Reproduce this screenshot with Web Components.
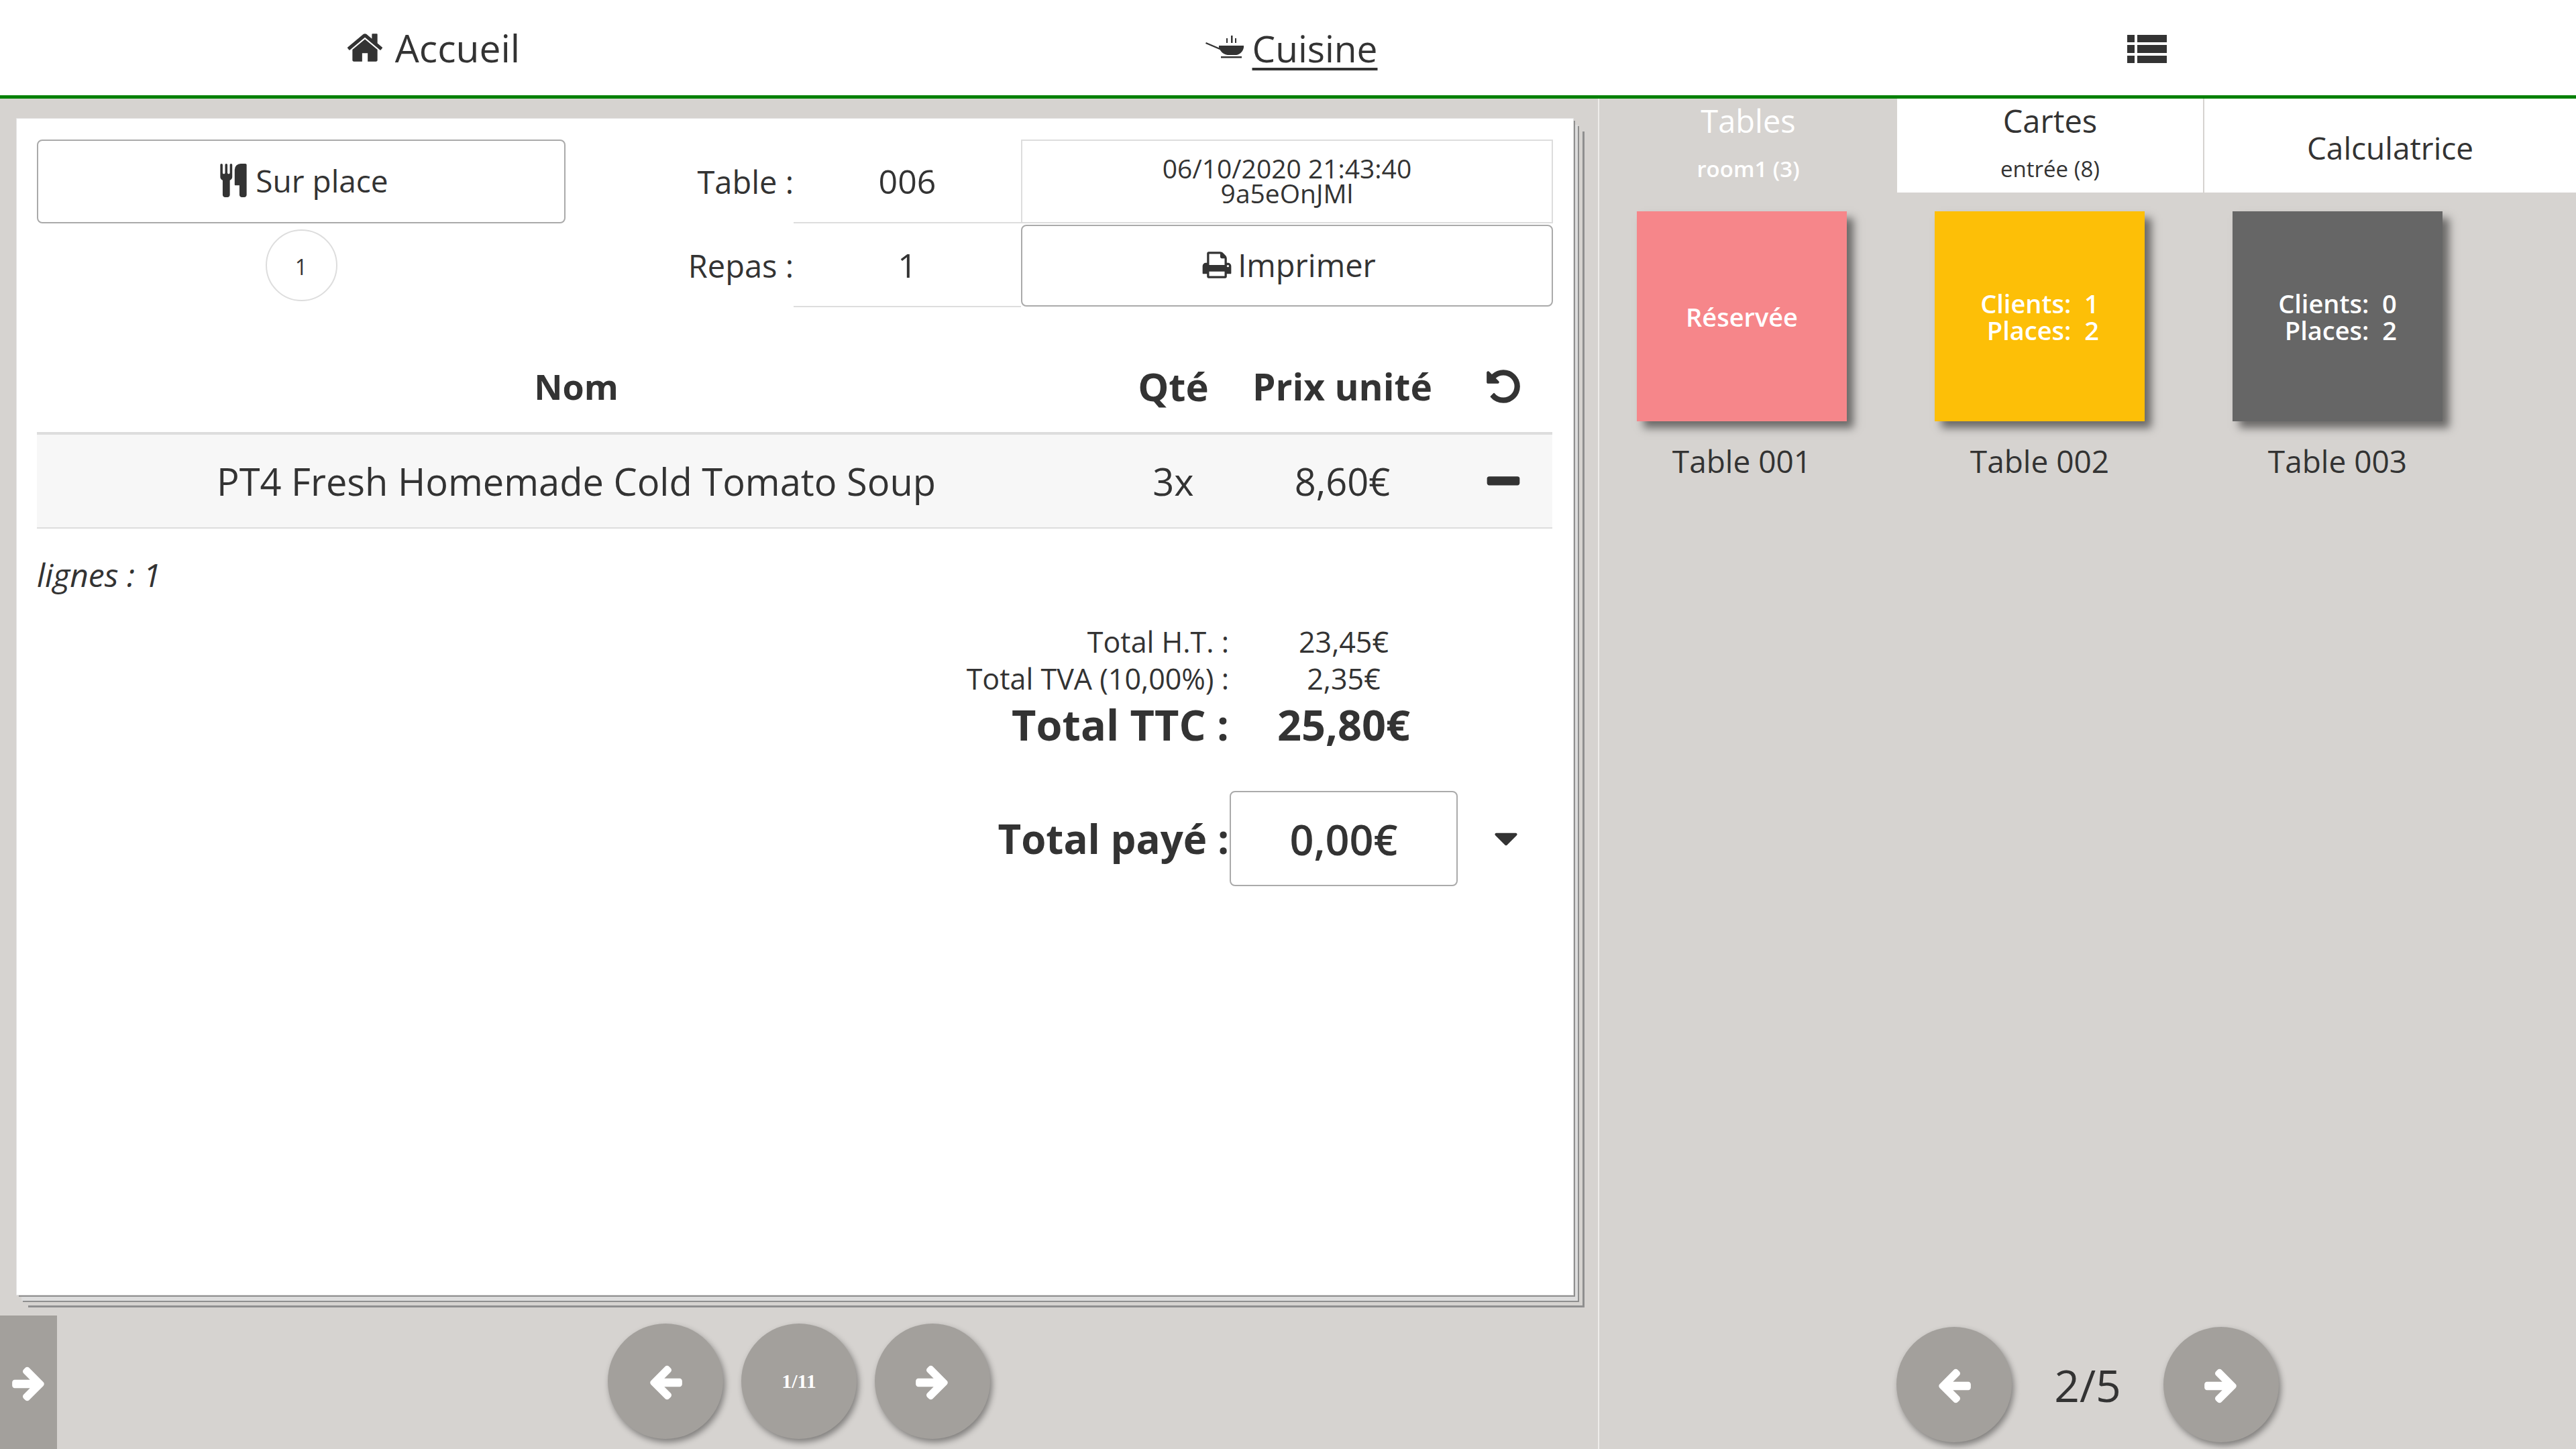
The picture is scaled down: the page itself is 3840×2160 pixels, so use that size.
<!DOCTYPE html>
<html lang="fr">
<head>
<meta charset="utf-8">
<title>Caisse</title>
<style>
html, body { margin: 0; height: 100%; overflow: hidden; }
body { font-family: "Open Sans", "Noto Sans", sans-serif; color: #333; background: #d6d3d0; }
</style>
</head>
<body>
<pos-app></pos-app>
<script>
const ICONS = {
    home: 'M1472 992v480q0 26-19 45t-45 19h-384v-384h-256v384h-384q-26 0-45-19t-19-45v-480q0-1 .5-3t.5-3l575-474 575 474q1 2 1 6zm223-69l-62 74q-8 9-21 11h-3q-13 0-21-7l-692-577-692 577q-12 8-24 7-13-2-21-11l-62-74q-8-10-7-23.500t11-21.500l719-599q32-26 76-26t76 26l244 204v-195q0-14 9-23t23-9h192q14 0 23 9t9 23v408l219 182q10 8 11 21.500t-7 23.500z',
    cutlery: 'M832 64v640q0 61-35.500 111t-92.500 70v779q0 52-38 90t-90 38h-128q-52 0-90-38t-38-90v-779q-57-20-92.500-70t-35.500-111v-640q0-26 19-45t45-19 45 19 19 45v416q0 26 19 45t45 19 45-19 19-45v-416q0-26 19-45t45-19 45 19 19 45v416q0 26 19 45t45 19 45-19 19-45v-416q0-26 19-45t45-19 45 19 19 45zm768 0v1600q0 52-38 90t-90 38h-128q-52 0-90-38t-38-90v-512h-224q-13 0-22.500-9.500t-9.500-22.500v-800q0-132 94-226t226-94h256q26 0 45 19t19 45z',
    print: 'M448 1536h896v-256h-896v256zm0-640h896v-384h-160q-40 0-68-28t-28-68v-160h-640v640zm1152 64q0-26-19-45t-45-19-45 19-19 45 19 45 45 19 45-19 19-45zm128 0v416q0 13-9.500 22.500t-22.500 9.500h-224v160q0 40-28 68t-68 28h-960q-40 0-68-28t-28-68v-160h-224q-13 0-22.500-9.500t-9.500-22.500v-416q0-79 56.500-135.500t135.500-56.500h64v-544q0-40 28-68t68-28h672q40 0 88 20t76 48l152 152q28 28 48 76t20 88v256h64q79 0 135.500 56.500t56.500 135.500z',
    undo: 'M1664 896q0 156-61 298t-164 245-245 164-298 61q-172 0-327-72.500t-264-204.500q-7-10-6.500-22.500t8.500-20.500l137-138q10-9 25-9 16 2 23 12 73 95 179 147t225 52q104 0 198.500-40.500t163.500-109.500 109.500-163.500 40.500-198.500-40.500-198.500-109.500-163.500-163.500-109.500-198.500-40.500q-98 0-188 35.500t-160 101.500l137 138q31 30 14 69-17 40-59 40h-448q-26 0-45-19t-19-45v-448q0-42 40-59 39-17 69 14l130 129q107-101 244.500-156.500t284.500-55.500q156 0 298 61t245 164 164 245 61 298z',
    left: 'M1664 896v128q0 53-32.500 90.500t-84.500 37.500h-704l293 294q38 36 38 90t-38 90l-75 76q-37 37-90 37-52 0-91-37l-651-652q-37-37-37-90 0-52 37-91l651-650q38-38 91-38 52 0 90 38l75 74q38 38 38 91t-38 91l-293 293h704q52 0 84.500 37.500t32.500 90.500z',
    right: 'M1600 960q0 54-37 91l-651 651q-39 37-91 37-51 0-90-37l-75-75q-38-38-38-91t38-91l293-293h-704q-52 0-84.500-37.500t-32.500-90.500v-128q0-53 32.500-90.500t84.500-37.500h704l-293-294q-38-36-38-90t38-90l75-75q38-38 90-38 53 0 91 38l651 651q37 35 37 90z',
    minus: 'M1600 736v192q0 40-28 68t-68 28h-1216q-40 0-68-28t-28-68v-192q0-40 28-68t68-28h1216q40 0 68 28t28 68z',
    caret: 'M1408 704q0 26-19 45l-448 448q-19 19-45 19t-45-19l-448-448q-19-19-19-45t19-45 45-19h896q26 0 45 19t19 45z'
};

class FaIcon extends HTMLElement {
    constructor() {
        super();
        this.attachShadow({ mode: 'open' });
    }

    connectedCallback() {
        const size = this.getAttribute('size') || 48;
        this.shadowRoot.innerHTML = `
        <style>
            :host { display: inline-flex; line-height: 0; }
            svg { width: ${size}px; height: ${size}px; fill: currentColor; }
        </style>
        <svg viewBox="0 0 1792 1792"><path d="${ICONS[this.getAttribute('name')]}"/></svg>`;
    }
}

class PosHeader extends HTMLElement {
    constructor() {
        super();
        this.attachShadow({ mode: 'open' });
    }

    connectedCallback() {
        this.shadowRoot.innerHTML = `
        <style>
            :host {
                display: grid;
                grid-template-columns: repeat(3, 1fr);
                height: 142px;
                background: #fff;
                border-bottom: 5px solid #008000;
                font-size: 57px;
            }
            .item { display: flex; align-items: center; justify-content: center; gap: 16px; padding-left: 10px; }
            .cuisine span { text-decoration: underline; text-decoration-thickness: 4px; text-underline-offset: 8px; font-size: 55px; }
            .cuisine { gap: 12px; }
            .list { padding: 3px 0 0; }
        </style>
        <div class="item"><fa-icon name="home" size="58"></fa-icon><span>Accueil</span></div>
        <div class="item cuisine">
            <svg width="58" height="36" viewBox="0 0 58 36" fill="#333">
                <path d="M1 10l21 9-1 2L0 12z"/>
                <path d="M20 15h37v3c-1 5-5 10-11 11H33c-6-1-11-5-13-11z"/>
                <rect x="23" y="31" width="31" height="2.500"/>
                <rect x="31" y="4" width="2" height="7"/><rect x="38" y="0" width="2.500" height="11"/><rect x="44" y="4" width="2" height="7"/>
            </svg>
            <span>Cuisine</span>
        </div>
        <div class="item list">
            <svg width="59" height="42" viewBox="0 0 59 42" fill="#333">
                <rect x="0" y="0" width="11" height="11"/><rect x="15" y="0" width="44" height="11"/>
                <rect x="0" y="15" width="11" height="12"/><rect x="15" y="15" width="44" height="12"/>
                <rect x="0" y="31" width="11" height="11"/><rect x="15" y="31" width="44" height="11"/>
            </svg>
        </div>`;
    }
}

class OutlineBox extends HTMLElement {
    constructor() {
        super();
        this.attachShadow({ mode: 'open' });
    }

    connectedCallback() {
        this.shadowRoot.innerHTML = `
        <style>
            :host {
                display: flex;
                align-items: center;
                justify-content: center;
                gap: 12px;
                box-sizing: border-box;
                background: #fff;
                border: 2px solid #aaa;
                border-radius: 8px;
            }
        </style>
        <slot></slot>`;
    }
}

class OrderSheet extends HTMLElement {
    constructor() {
        super();
        this.attachShadow({ mode: 'open' });
    }

    connectedCallback() {
        this.shadowRoot.innerHTML = `
        <style>
            :host {
                display: block;
                box-sizing: border-box;
                width: 2320px;
                height: 1753px;
                margin: 30px 0 0 25px;
                padding: 31px 31px 0 30px;
                background: #fff;
                box-shadow:
                    0 0 0 1px #e4e4e4,
                    3px 3px 0 #8f8f8f,
                    7px 9px 0 0 #dcdcdc,
                    9px 11px 0 0 #8f8f8f,
                    14px 16px 0 0 #d6d3d0,
                    17px 19px 0 0 #8f8f8f;
            }
            .top {
                display: grid;
                grid-template-columns: 788px 340px 339px 793px;
                grid-template-rows: 125px 125px;
            }
            .type { grid-column: 1; grid-row: 1; font-size: 46px; gap: 8px; padding: 0 0 3px 4px; }
            .guests { grid-column: 1; grid-row: 2; display: flex; justify-content: center; align-items: flex-start; padding-top: 9px; }
            .circle {
                width: 107px; height: 107px; box-sizing: border-box;
                border: 2px solid #ddd; border-radius: 50%;
                display: flex; align-items: center; justify-content: center;
                font-size: 32px; padding-top: 3px;
            }
            .label { font-size: 47px; display: flex; align-items: center; justify-content: flex-end; }
            .value { font-size: 50px; display: flex; align-items: center; justify-content: center; border-bottom: 2px solid #ddd; }
            .stamp {
                box-sizing: border-box; border: 2px solid #ddd;
                display: flex; align-items: center; justify-content: center;
                text-align: center; white-space: pre-line;
                font-size: 39px; line-height: 37px; padding-bottom: 4px;
            }
            .print { font-size: 47px; margin-top: 2px; height: 122px; gap: 8px; padding: 0 0 3px 5px; }
            .cols {
                display: grid;
                grid-template-columns: 1608px 172px 332px 148px;
                align-items: center;
                text-align: center;
            }
            .cols > * { justify-self: center; }
            .head { margin-top: 54px; height: 136px; box-sizing: border-box; padding-bottom: 5px; font-weight: 700; font-size: 55px; border-bottom: 4px solid #ddd; }
            .head .nom { font-size: 52px; }
            .head .qte { font-size: 58px; }
            .line { height: 138px; font-size: 56px; background: #f7f7f7; border-bottom: 2px solid #ddd; }
            .line fa-icon { margin-top: 3px; }
            .count { font-style: italic; font-size: 48px; line-height: 60px; padding-top: 39px; }
            .totals {
                display: grid;
                grid-template-columns: 1777px 342px;
                margin-top: 42px;
                align-items: center;
                text-align: center;
            }
            .totals .k { text-align: right; }
            .small { font-size: 43px; height: 55px; line-height: 55px; }
            .big { font-size: 63px; font-weight: 700; height: 82px; line-height: 82px; }
            .paid { display: flex; align-items: center; margin-top: 58px; font-size: 60px; font-weight: 700; }
            .paid .k { width: 1777px; text-align: right; box-sizing: border-box; }
            .paid-box { width: 340px; height: 142px; font-size: 63px; font-weight: 600; margin-left: 1px; }
            .paid fa-icon { margin-left: 43px; }
        </style>
        <div class="top">
            <outline-box class="type"><fa-icon name="cutlery" size="50"></fa-icon><span>Sur place</span></outline-box>
            <div class="guests"><div class="circle">1</div></div>
            <div class="label" style="grid-column:2;grid-row:1">Table :</div>
            <div class="value" style="grid-column:3;grid-row:1">006</div>
            <div class="stamp" style="grid-column:4;grid-row:1">06/10/2020 21:43:40
9a5eOnJMl</div>
            <div class="label" style="grid-column:2;grid-row:2">Repas :</div>
            <div class="value" style="grid-column:3;grid-row:2">1</div>
            <outline-box class="print" style="grid-column:4;grid-row:2"><fa-icon name="print" size="46"></fa-icon><span>Imprimer</span></outline-box>
        </div>
        <div class="cols head">
            <span class="nom">Nom</span><span class="qte">Qté</span><span>Prix unité</span>
            <fa-icon name="undo" size="58"></fa-icon>
        </div>
        <div class="cols line">
            <span>PT4 Fresh Homemade Cold Tomato Soup</span><span>3x</span><span>8,60€</span>
            <fa-icon name="minus" size="62"></fa-icon>
        </div>
        <div class="count">lignes : 1</div>
        <div class="totals">
            <span class="k small">Total H.T. :</span><span class="small">23,45€</span>
            <span class="k small">Total TVA (10,00%) :</span><span class="small">2,35€</span>
            <span class="k big">Total TTC :</span><span class="big">25,80€</span>
        </div>
        <div class="paid">
            <span class="k">Total payé :</span>
            <outline-box class="paid-box">0,00€</outline-box>
            <fa-icon name="caret" size="58"></fa-icon>
        </div>`;
    }
}

class RoundBtn extends HTMLElement {
    constructor() {
        super();
        this.attachShadow({ mode: 'open' });
    }

    connectedCallback() {
        this.shadowRoot.innerHTML = `
        <style>
            :host {
                display: flex;
                align-items: center;
                justify-content: center;
                width: 172px;
                height: 172px;
                flex: none;
                border-radius: 50%;
                background: #a3a09c;
                color: #fff;
                box-shadow: 3px 5px 10px rgba(0, 0, 0, .4);
            }
        </style>
        <slot></slot>`;
    }
}

class TableTile extends HTMLElement {
    constructor() {
        super();
        this.attachShadow({ mode: 'open' });
    }

    connectedCallback() {
        this.shadowRoot.innerHTML = `
        <style>
            :host { display: flex; flex-direction: column; align-items: center; width: 313px; }
            .tile {
                box-sizing: border-box;
                width: 313px;
                height: 313px;
                display: flex;
                flex-direction: column;
                align-items: center;
                justify-content: center;
                color: #fff;
                font-size: 38px;
                line-height: 40px;
                font-weight: 600;
                white-space: pre;
                text-align: center;
                background: ${this.getAttribute('color')};
                box-shadow: 10px 10px 12px rgba(0, 0, 0, .5);
            }
            .name { font-size: 46px; line-height: 60px; margin-top: 29px; }
        </style>
        <div class="tile"><slot></slot></div>
        <div class="name">${this.getAttribute('name')}</div>`;
    }
}

class SidePanel extends HTMLElement {
    constructor() {
        super();
        this.attachShadow({ mode: 'open' });
    }

    connectedCallback() {
        this.shadowRoot.innerHTML = `
        <style>
            :host {
                display: flex;
                flex-direction: column;
                box-sizing: border-box;
                border-left: 2px solid #eeecea;
                height: 2013px;
            }
            .tabs { display: grid; grid-template-columns: 444px 456px 1fr; height: 140px; }
            .tab { display: flex; flex-direction: column; align-items: center; justify-content: center; background: #fff; font-size: 47px; }
            .tab + .tab + .tab { border-left: 2px solid #d6d3d0; padding-top: 6px; box-sizing: border-box; font-size: 46px; }
            .tab.active { background: transparent; color: #fff; }
            .tab.active small { font-weight: 600; }
            .tab b { font-weight: 400; line-height: 66px; height: 72px; }
            .tab small { font-size: 33px; line-height: 66px; height: 68px; }
            .grid { display: grid; grid-template-columns: repeat(3, 444px); padding: 28px 0 0 56px; }
            .pager {
                margin-top: auto;
                padding-bottom: 10px;
                display: grid;
                grid-template-columns: 172px 226px 172px;
                justify-content: center;
                align-items: center;
                justify-items: center;
                font-size: 66px;
            }
        </style>
        <div class="tabs">
            <div class="tab active"><b>Tables</b><small>room1 (3)</small></div>
            <div class="tab"><b>Cartes</b><small>entrée (8)</small></div>
            <div class="tab">Calculatrice</div>
        </div>
        <div class="grid">
            <table-tile name="Table 001" color="#f6868a">Réservée</table-tile>
            <table-tile name="Table 002" color="#fdbf07">Clients:  1
 Places:  2</table-tile>
            <table-tile name="Table 003" color="#666666">Clients:  0
 Places:  2</table-tile>
        </div>
        <div class="pager">
            <round-btn><fa-icon name="left" size="58"></fa-icon></round-btn>
            <span>2/5</span>
            <round-btn><fa-icon name="right" size="58"></fa-icon></round-btn>
        </div>`;
    }
}

class PosApp extends HTMLElement {
    constructor() {
        super();
        this.attachShadow({ mode: 'open' });
    }

    connectedCallback() {
        this.shadowRoot.innerHTML = `
        <style>
            :host { display: block; height: 2160px; position: relative; }
            .body { display: grid; grid-template-columns: 2382px 1fr; height: 2013px; }
            .left { display: flex; flex-direction: column; }
            .pager { margin-top: auto; padding-bottom: 15px; display: flex; justify-content: center; gap: 27px; }
            .page { font: 700 30px "Liberation Serif", serif; }
            .toggle {
                position: absolute;
                left: 0;
                bottom: 0;
                width: 85px;
                height: 199px;
                background: #a3a09c;
                color: #fff;
                display: flex;
                align-items: center;
                justify-content: center;
            }
        </style>
        <pos-header></pos-header>
        <div class="body">
            <div class="left">
                <order-sheet></order-sheet>
                <div class="pager">
                    <round-btn><fa-icon name="left" size="58"></fa-icon></round-btn>
                    <round-btn><span class="page">1/11</span></round-btn>
                    <round-btn><fa-icon name="right" size="58"></fa-icon></round-btn>
                </div>
            </div>
            <side-panel></side-panel>
        </div>
        <div class="toggle"><fa-icon name="right" size="58"></fa-icon></div>`;
    }
}

customElements.define('fa-icon', FaIcon);
customElements.define('pos-header', PosHeader);
customElements.define('outline-box', OutlineBox);
customElements.define('order-sheet', OrderSheet);
customElements.define('round-btn', RoundBtn);
customElements.define('table-tile', TableTile);
customElements.define('side-panel', SidePanel);
customElements.define('pos-app', PosApp);
</script>
</body>
</html>
